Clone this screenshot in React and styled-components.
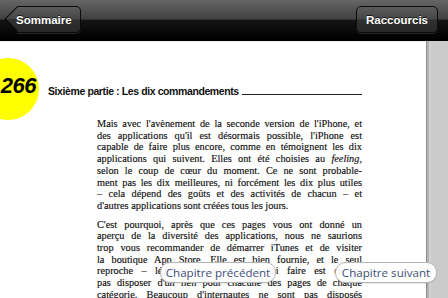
import React from 'react';
import styled, { createGlobalStyle } from 'styled-components';

const GlobalStyle = createGlobalStyle`
  html, body {
    margin: 0;
    padding: 0;
    background: #fff;
    overflow: hidden;
  }
`;

const Screen = styled.div`
  position: relative;
  width: 448px;
  height: 298px;
  display: flex;
  flex-direction: column;
  overflow: hidden;
  font-family: "Liberation Sans", Arial, sans-serif;
`;

const NavBar = styled.div`
  height: 41px;
  flex: none;
  box-sizing: border-box;
  display: flex;
  align-items: center;
  justify-content: space-between;
  padding-bottom: 1px;
  background: linear-gradient(#666 0%, #404040 48%, #141414 50%, #000 100%);
  border-bottom: 1px solid #000;
`;

const BarButton = styled.div`
  position: relative;
  height: 27px;
  box-sizing: border-box;
  display: flex;
  align-items: center;
  color: #fff;
  font-size: 11.5px;
  font-weight: bold;
  text-shadow: 0 -1px 0 rgba(0, 0, 0, 0.7);
  background: linear-gradient(#5c5c5c 0%, #464646 48%, #303030 52%, #282828 100%);
  border: 1px solid #0c0c0c;
  box-shadow: 0 1px 0 rgba(255, 255, 255, 0.12);
  border-radius: ${(p) => (p.$back ? '0 5px 5px 0' : '5px')};
  border-left: ${(p) => (p.$back ? 'none' : '1px solid #0c0c0c')};
  margin: ${(p) => (p.$back ? '0 0 0 17px' : '0 10px 0 0')};
  padding: ${(p) => (p.$back ? '0 8px 0 0' : '0 9px')};

  &::before {
    content: ${(p) => (p.$back ? "''" : 'none')};
    position: absolute;
    left: -9.2px;
    top: 3.3px;
    width: 18.4px;
    height: 18.4px;
    box-sizing: border-box;
    transform: rotate(45deg);
    background: linear-gradient(135deg, #5c5c5c 0%, #464646 48%, #303030 52%, #282828 100%);
    border-left: 1px solid #0c0c0c;
    border-bottom: 1px solid #0c0c0c;
  }
`;

const Label = styled.span`
  position: relative;
  z-index: 1;
  margin-left: ${(p) => (p.$back ? '-1px' : '0')};
`;

const Content = styled.div`
  flex: 1;
  display: flex;
  min-height: 0;
`;

const Page = styled.div`
  flex: 1;
  background: #fff;
  padding-top: 16px;
  overflow: hidden;
  border-top: 1px solid #ececec;
`;

const Gutter = styled.div`
  width: 21px;
  flex: none;
  background: #cbcbcb;
  border-left: 1px solid #8e8e8e;
  box-shadow: inset 2px 0 0 #b4b4b4, inset 4px 0 0 #d2d2d2;
`;

const HeadingRow = styled.div`
  display: flex;
  align-items: flex-start;
  width: 362px;
`;

const Badge = styled.div`
  flex: none;
  width: 62px;
  height: 62px;
  margin-left: -23px;
  margin-bottom: -15px;
  border-radius: 50%;
  background: #ffff00;
  display: flex;
  align-items: center;
  justify-content: flex-end;
  box-sizing: border-box;
  padding: 0 3px 7px 0;
  font-family: "Liberation Sans", Arial, sans-serif;
  font-size: 22px;
  font-weight: bold;
  font-style: italic;
  color: #000;
  letter-spacing: -0.5px;
`;

const Heading = styled.div`
  margin: 27px 0 0 9px;
  font-family: "Liberation Sans", Arial, sans-serif;
  font-size: 10.5px;
  letter-spacing: -0.4px;
  line-height: 12px;
  font-weight: bold;
  color: #111;
  white-space: nowrap;
`;

const Rule = styled.div`
  flex: 1;
  margin: 27px 0 0 3px;
  height: 9px;
  border-bottom: 1px solid #222;
`;

const Body = styled.div`
  margin: 13px 0 0 97px;
  width: 265px;
  font-family: "Liberation Serif", "Times New Roman", serif;
  font-size: 10.3px;
  line-height: 11.7px;
  color: #111;
  -webkit-text-stroke: 0.15px #111;
`;

const Paragraph = styled.div`
  margin-bottom: 7px;
`;

const Line = styled.div`
  white-space: nowrap;
  text-align: justify;
  text-align-last: ${(p) => (p.$last ? 'left' : 'justify')};
`;

const Pill = styled.div`
  position: absolute;
  top: 262px;
  left: ${(p) => p.$left}px;
  width: ${(p) => p.$width}px;
  height: 21px;
  box-sizing: border-box;
  display: flex;
  align-items: center;
  justify-content: center;
  border-radius: 10px;
  background: rgba(255, 255, 255, 0.95);
  border: 1px solid #b5b5b5;
  box-shadow: 0 1px 1px rgba(0, 0, 0, 0.08);
  font-family: "Open Sans", "DejaVu Sans", sans-serif;
  font-size: 11.6px;
  color: #3e4f78;
  white-space: nowrap;
`;

const first = [
  "Mais avec l'avènement de la seconde version de l'iPhone, et",
  "des applications qu'il est désormais possible, l'iPhone est",
  'capable de faire plus encore, comme en témoignent les dix',
  null,
  'selon le coup de cœur du moment. Ce ne sont probable-',
  'ment pas les dix meilleures, ni forcément les dix plus utiles',
  '– cela dépend des goûts et des activités de chacun – et',
];

const second = [
  "C'est pourquoi, après que ces pages vous ont donné un",
  'aperçu de la diversité des applications, nous ne saurions',
  'trop vous recommander de démarrer iTunes et de visiter',
  'la boutique App Store. Elle est bien fournie, et le seul',
  "reproche – légitime – qu'on peut lui faire est de ne",
  "pas disposer d'un lien pour chacune des pages de chaque",
  "catégorie. Beaucoup d'internautes ne sont pas disposés",
];

export default function App() {
  return (
    <Screen>
      <GlobalStyle />
      <NavBar>
        <BarButton $back>
          <Label $back>Sommaire</Label>
        </BarButton>
        <BarButton>
          <Label>Raccourcis</Label>
        </BarButton>
      </NavBar>
      <Content>
        <Page>
          <HeadingRow>
            <Badge>266</Badge>
            <Heading>Sixième partie : Les dix commandements</Heading>
            <Rule />
          </HeadingRow>
          <Body>
            <Paragraph>
              {first.map((t, i) =>
                t === null ? (
                  <Line key={i}>
                    applications qui suivent. Elles ont été choisies au <em>feeling,</em>
                  </Line>
                ) : (
                  <Line key={i}>{t}</Line>
                )
              )}
              <Line $last>d'autres applications sont créées tous les jours.</Line>
            </Paragraph>
            <Paragraph>
              {second.map((t, i) => (
                <Line key={i}>{t}</Line>
              ))}
            </Paragraph>
          </Body>
        </Page>
        <Gutter />
      </Content>
      <Pill $left={160} $width={116}>Chapitre précédent</Pill>
      <Pill $left={335} $width={102}>Chapitre suivant</Pill>
    </Screen>
  );
}
